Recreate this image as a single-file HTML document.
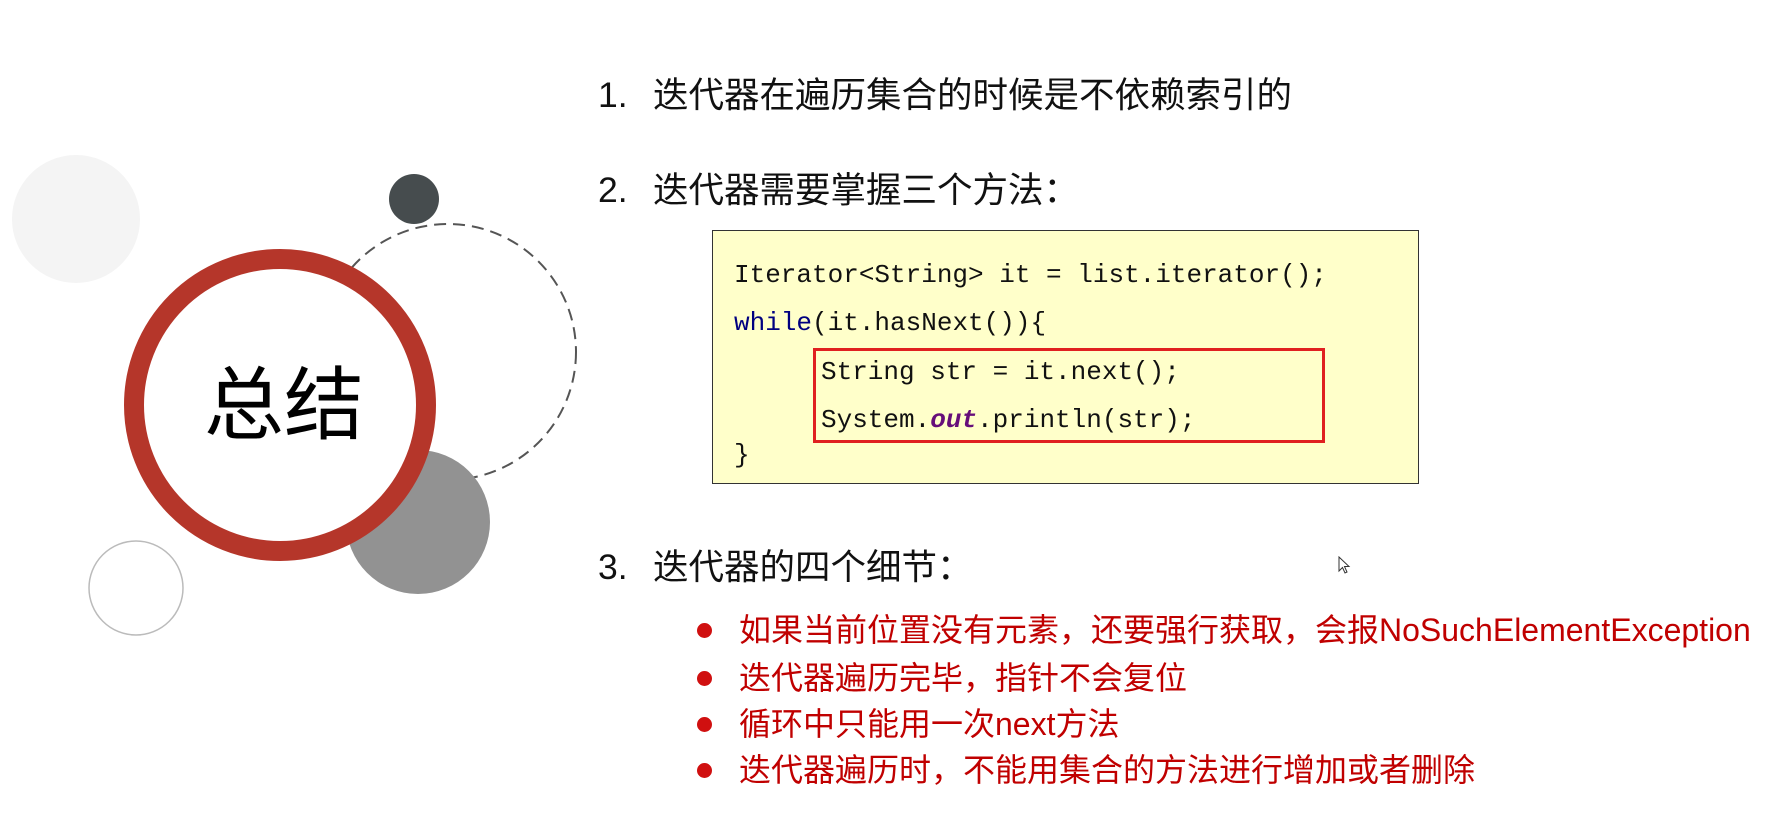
<!DOCTYPE html>
<html><head><meta charset="utf-8"><style>
body{margin:0;width:1780px;height:813px;background:#fff;position:relative;overflow:hidden;font-family:"Liberation Sans","Noto Sans CJK SC",sans-serif}
.a{position:absolute;white-space:nowrap}
.h{font-size:35.5px;color:#111;line-height:1}
.h span{display:inline-block;width:55px}
.code{font-family:"Liberation Mono","Noto Sans CJK SC",monospace;font-size:26px;color:#111;line-height:1}
.b{font-size:32px;color:#c00000;line-height:1}
.dot{position:absolute;width:15px;height:15px;border-radius:50%;background:#d01010}
</style></head><body>
<svg class="a" style="left:0;top:0" width="620" height="813">
<circle cx="76" cy="219" r="64" fill="#f4f4f4"/>
<circle cx="414" cy="199" r="25" fill="#464c4e"/>
<circle cx="448" cy="352" r="128" fill="none" stroke="#555" stroke-width="2" stroke-dasharray="12 7"/>
<circle cx="418" cy="522" r="72" fill="#929292"/>
<circle cx="280" cy="405" r="146" fill="#fff" stroke="#b5362a" stroke-width="20"/>
<circle cx="136" cy="588" r="47" fill="#fff" stroke="#bbb" stroke-width="1.5"/>
<text x="284" y="433" font-size="80" text-anchor="middle" font-family="Noto Sans CJK SC, sans-serif" fill="#000">总结</text>
</svg>
<div class="a h" style="left:598px;top:78px"><span>1.</span>迭代器在遍历集合的时候是不依赖索引的</div>
<div class="a h" style="left:598px;top:173px"><span>2.</span>迭代器需要掌握三个方法：</div>
<div class="a" style="left:712px;top:230px;width:705px;height:252px;background:#ffffca;border:1.5px solid #333"></div>
<div class="a code" style="left:734px;top:262px">Iterator&lt;String&gt; it = list.iterator();</div>
<div class="a code" style="left:734px;top:310px"><span style="color:#000080">while</span>(it.hasNext()){</div>
<div class="a code" style="left:821px;top:359px">String str = it.next();</div>
<div class="a code" style="left:821px;top:407px">System.<b style="color:#660e7a;font-style:italic">out</b>.println(str);</div>
<div class="a code" style="left:734px;top:442px">}</div>
<div class="a" style="left:813px;top:348px;width:506px;height:89px;border:3px solid #e02020"></div>
<div class="a h" style="left:598px;top:550px"><span>3.</span>迭代器的四个细节：</div>
<div class="dot" style="left:697px;top:623px"></div>
<div class="dot" style="left:697px;top:671px"></div>
<div class="dot" style="left:697px;top:717px"></div>
<div class="dot" style="left:697px;top:763px"></div>
<div class="a b" style="left:739px;top:614px">如果当前位置没有元素，还要强行获取，会报NoSuchElementException</div>
<div class="a b" style="left:739px;top:662px">迭代器遍历完毕，指针不会复位</div>
<div class="a b" style="left:739px;top:708px">循环中只能用一次next方法</div>
<div class="a b" style="left:739px;top:754px">迭代器遍历时，不能用集合的方法进行增加或者删除</div>
<svg class="a" style="left:1338px;top:556px" width="14" height="20"><path d="M1 1 L1 15 L4.5 11.5 L7 17 L9 16 L6.5 10.5 L11 10.5 Z" fill="#fff" stroke="#333" stroke-width="1"/></svg>
</body></html>
